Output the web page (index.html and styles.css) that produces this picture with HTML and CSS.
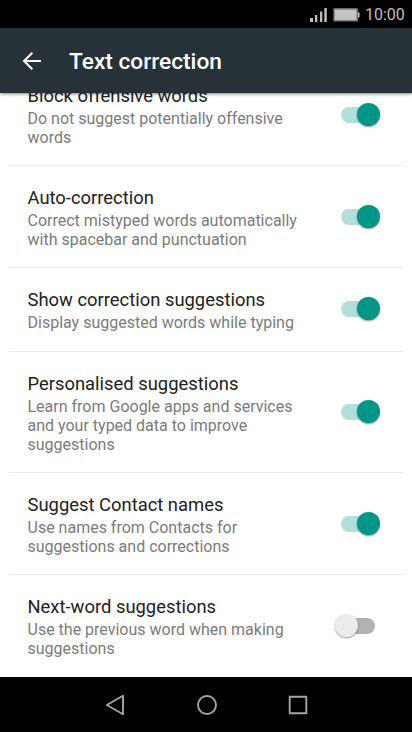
FILE: index.html
```html
<!DOCTYPE html>
<html lang="en">
<head>
<meta charset="utf-8">
<title>Text correction</title>
<link rel="stylesheet" href="styles.css">
</head>
<body>
<div class="phone">
  <div class="status">
    <svg class="status-icons" width="52" height="18" viewBox="0 0 52 18">
      <path fill="#bdbdbd" d="M1 13h3v4H1zM6 10h2.300v7H6zM11 6.500h2.300V17H11zM15.300 3h2.500v14h-2.500z"/>
      <rect x="25.200" y="4" width="22.800" height="11.600" fill="#c4c4c4" stroke="#8b8b8b" stroke-width="1.500"/>
      <path fill="#c4c4c4" d="M48.800 7.300h1.700v5h-1.700z"/>
    </svg>
    <span class="clock">10:00</span>
  </div>
  <header class="bar">
    <svg class="back" width="20" height="20" viewBox="0 0 20 20"><path d="M19 10H2.300M10.300 1.800L2.100 10l8.200 8.200" fill="none" stroke="#fff" stroke-width="2.100"/></svg>
    <h1>Text correction</h1>
  </header>
  <main class="list">
    <section class="row first"><div class="text"><h2>Block offensive words</h2><p>Do not suggest potentially offensive<br>words</p></div><span class="switch on"></span></section>
    <section class="row"><div class="text"><h2>Auto-correction</h2><p>Correct mistyped words automatically<br>with spacebar and punctuation</p></div><span class="switch on"></span></section>
    <section class="row short"><div class="text"><h2>Show correction suggestions</h2><p>Display suggested words while typing</p></div><span class="switch on"></span></section>
    <section class="row"><div class="text"><h2>Personalised suggestions</h2><p>Learn from Google apps and services<br>and your typed data to improve<br>suggestions</p></div><span class="switch on"></span></section>
    <section class="row"><div class="text"><h2>Suggest Contact names</h2><p>Use names from Contacts for<br>suggestions and corrections</p></div><span class="switch on"></span></section>
    <section class="row last"><div class="text"><h2>Next-word suggestions</h2><p>Use the previous word when making<br>suggestions</p></div><span class="switch"></span></section>
  </main>
  <nav class="nav">
    <svg width="20" height="22" viewBox="0 0 20 22"><path d="M18 1.700v18.600L1.800 11z"/></svg>
    <svg width="20" height="22" viewBox="0 0 20 22"><circle cx="10" cy="11" r="9"/></svg>
    <svg width="20" height="22" viewBox="0 0 20 22"><rect x="1.700" y="2.700" width="16.600" height="16.600"/></svg>
  </nav>
</div>
</body>
</html>
```
FILE: styles.css
```css
* { box-sizing: border-box; }
body { margin: 0; font-family: Roboto, sans-serif; background: #000; }
h1, h2, p { margin: 0; }
.phone { width: 412px; height: 732px; display: flex; flex-direction: column; overflow: hidden; }
.status { height: 28px; flex: none; background: #000; display: flex; justify-content: flex-end; align-items: center; padding: 2px 7px 0 0; color: #bdbdbd; }
.status-icons { margin-right: 4px; margin-top: -2px; }
.clock { font-size: 16px; line-height: 20px; width: 40px; }
.bar { height: 65px; flex: none; background: #263238; display: flex; align-items: center; padding: 2px 0 0 22px; box-shadow: 0 1px 3px rgba(0, 0, 0, .5); z-index: 1; }
.back { margin: -2px 27px 0 0; }
h1 { font-size: 22.700px; line-height: 28px; font-weight: 500; color: #fff; }
.list { height: 584px; flex: none; overflow: hidden; background: #fff; }
.row { margin: 0 9px; padding: 21px 25.500px 18px 18.500px; border-bottom: 1px solid #e9e9e9; display: flex; align-items: center; justify-content: space-between; }
.first { margin-top: -29px; }
.short { height: 84px; padding-bottom: 20px; }
.last { border-bottom: 0; }
.text { white-space: nowrap; }
h2 { font-size: 18.400px; line-height: 22px; font-weight: 400; color: #212121; margin-bottom: 2px; }
.row p { font-size: 16px; line-height: 19px; color: #7b7b7b; }
.switch { position: relative; width: 43px; height: 24px; flex: none; margin: -3px 0 0; }
.switch::before { content: ""; position: absolute; left: 6px; top: 4px; width: 34px; height: 16px; border-radius: 8px; background: #b2b2b2; }
.switch::after { content: ""; position: absolute; left: 0; top: 0; width: 23px; height: 23px; border-radius: 50%; background: #ececec; box-shadow: 0 1px 2px rgba(0, 0, 0, .4); }
.switch.on::before { background: #b2dfdb; }
.switch.on::after { left: 22.500px; background: #009688; }
.nav { height: 55px; flex: none; background: #000; display: flex; justify-content: center; align-items: center; gap: 71.500px; padding-left: 1px; }
.nav svg { fill: none; stroke: #a5a5a5; stroke-width: 1.900; stroke-linejoin: round; }
```
